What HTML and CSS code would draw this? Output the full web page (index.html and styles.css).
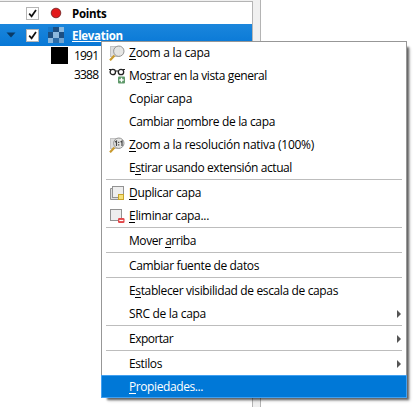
FILE: index.html
```html
<!DOCTYPE html>
<html lang="es">
<head>
<meta charset="utf-8">
<title>Capas</title>
<link rel="stylesheet" href="styles.css">
</head>
<body>
<div class="dock">
  <div class="tree">
    <div class="layer">
      <span class="twisty"></span>
      <svg class="check" viewBox="0 0 13 13"><rect x=".5" y=".5" width="12" height="12" fill="#fff" stroke="#b5b5b5"/><path d="M3.2 6.6 5.6 9.3 10 3" fill="none" stroke="#111" stroke-width="1.7"/></svg>
      <svg class="symbol" viewBox="0 0 16 16"><circle cx="8" cy="8" r="4.8" fill="#e31a1c" stroke="#6b2020" stroke-width=".8"/></svg>
      <span class="name points">Points</span>
    </div>
    <div class="layer selected">
      <svg class="twisty" viewBox="0 0 10 6"><path d="M.5 .5h9L5 5.5z" fill="#0a3a66"/></svg>
      <svg class="check" viewBox="0 0 13 13"><rect x=".5" y=".5" width="12" height="12" fill="#fff" stroke="#b5b5b5"/><path d="M3.2 6.6 5.6 9.3 10 3" fill="none" stroke="#111" stroke-width="1.7"/></svg>
      <svg class="symbol" viewBox="0 0 16 16" shape-rendering="crispEdges"><path fill="#2b6ca8" d="M0 0h16v16H0z"/><path fill="#1c4f82" d="M5 0h6v5H5zM0 5h5v6H0zM11 5h5v6h-5z"/><path fill="#8bb8dd" d="M11 0h5v5h-5zM5 5h6v6H5zM0 11h5v5H0z"/><path fill="#6fa3d0" d="M11 11h5v5h-5z"/><path fill="#1677c9" d="M0 0h5v5H0z"/></svg>
      <span class="name elevation">Elevation</span>
    </div>
    <div class="legend"><span class="swatch"></span><span class="value">1991</span></div>
    <div class="legend"><span class="swatch white"></span><span class="value">3388</span></div>
  </div>
</div>
<div class="menu">
  <div class="item"><svg class="icon" viewBox="0 0 16 16"><rect x="1.5" y="1.5" width="9" height="10" fill="#ddd" stroke="#c4c4c4"/><path d="M1 15.3 5.5 10.6" stroke="#c99a2e" stroke-width="2.2"/><circle cx="9.8" cy="6.2" r="5.2" fill="#e4e4e2" fill-opacity=".9" stroke="#969696"/></svg><span class="label" data-w="81"><u>Z</u>oom a la capa</span></div>
  <div class="item"><svg class="icon" viewBox="0 0 16 16"><path d="M0 1.5h2M14 1.5h2M6.5 3.5q1.5-1.5 3 0" stroke="#222" fill="none"/><circle cx="3.8" cy="4" r="2.7" fill="none" stroke="#222" stroke-width="1.3"/><circle cx="12" cy="4" r="2.7" fill="none" stroke="#222" stroke-width="1.3"/><rect x="9" y="8.5" width="7" height="7" rx="1" fill="#5d9869"/><path d="M12.5 9.8v4.4M10.3 12h4.4" stroke="#fff" stroke-width="1.3"/></svg><span class="label" data-w="138">Mo<u>s</u>trar en la vista general</span></div>
  <div class="item"><span class="icon"></span><span class="label" data-w="63">Copiar capa</span></div>
  <div class="item"><span class="icon"></span><span class="label" data-w="146">Cambiar <u>n</u>ombre de la capa</span></div>
  <div class="item"><svg class="icon" viewBox="0 0 16 16"><rect x="1.5" y="1.5" width="9" height="10" fill="#ddd" stroke="#c4c4c4"/><path d="M1 15.3 5.5 10.6" stroke="#c99a2e" stroke-width="2.2"/><circle cx="9.8" cy="6.2" r="5.2" fill="#e4e4e2" fill-opacity=".9" stroke="#969696"/><path d="M6 5 7.5 4v5M11.5 5 13 4v5M9.7 4.8v1.2M9.7 7.3v1.2" stroke="#444" stroke-width="1.2" fill="none"/></svg><span class="label" data-w="185"><u>Z</u>oom a la resolución nativa (100%)</span></div>
  <div class="item"><span class="icon"></span><span class="label" data-w="163">E<u>s</u>tirar usando extensión actual</span></div>
  <div class="separator"></div>
  <div class="item"><svg class="icon" viewBox="0 0 16 16"><path d="M3 3.5H1.5v11H10" fill="#ddd" stroke="#929292"/><rect x="3.5" y="1.5" width="11" height="11" fill="#eee" stroke="#929292"/><rect x="9.5" y="9.5" width="5" height="5" fill="#f6e27a" stroke="#c8a42c"/></svg><span class="label" data-w="72"><u>D</u>uplicar capa</span></div>
  <div class="item"><svg class="icon" viewBox="0 0 16 16"><rect x="1.5" y="1.5" width="11" height="11" fill="#eee" stroke="#929292"/><rect x="9" y="10" width="6.5" height="5" rx="1.3" fill="#e2474a"/><path d="M10.3 12.5h4" stroke="#fff" stroke-width="1.2"/></svg><span class="label" data-w="80"><u>E</u>liminar capa...</span></div>
  <div class="separator"></div>
  <div class="item"><span class="icon"></span><span class="label" data-w="67">Mover <u>a</u>rriba</span></div>
  <div class="separator"></div>
  <div class="item"><span class="icon"></span><span class="label" data-w="130">Cambiar fuente de datos</span></div>
  <div class="separator"></div>
  <div class="item"><span class="icon"></span><span class="label" data-w="209">E<u>s</u>tablecer visibilidad de escala de capas</span></div>
  <div class="item"><span class="icon"></span><span class="label" data-w="77">SRC de la capa</span><span class="arrow"></span></div>
  <div class="separator"></div>
  <div class="item"><span class="icon"></span><span class="label" data-w="44">Exportar</span><span class="arrow"></span></div>
  <div class="separator"></div>
  <div class="item"><span class="icon"></span><span class="label" data-w="33">Estilos</span><span class="arrow"></span></div>
  <div class="item active"><span class="icon"></span><span class="label" data-w="74"><u>P</u>ropiedades...</span></div>
</div>
<script src="menu.js"></script>
</body>
</html>
```
FILE: styles.css
```css
* { box-sizing: border-box; }
body {
  margin: 0;
  width: 416px;
  height: 407px;
  overflow: hidden;
  background: #fff;
  color: #000;
  font: 12px/15px "Open Sans", "Noto Sans", sans-serif;
}
u { text-decoration: none; box-shadow: 0 1px 0 currentColor; display: inline-block; line-height: 12px; }
.dock {
  width: 261px;
  height: 407px;
  padding: 1px 7px 0 0;
  background: #f0f0f0;
  border-right: 1px solid #b4b4b4;
}
.tree {
  height: 100%;
  background: #fff;
  border-top: 1px solid #b4b4b4;
  border-right: 1px solid #b4b4b4;
}
.layer {
  display: flex;
  align-items: center;
  height: 22px;
  padding-left: 6px;
}
.selected { background: linear-gradient(#1b86dc, #0878d6); color: #fff; }
.twisty { width: 10px; height: 6px; margin-right: 10px; }
.check { width: 13px; height: 13px; margin-right: 9px; }
.symbol { width: 16px; height: 16px; margin-right: 8px; }
.name { font-weight: 700; white-space: nowrap; font-size: 11.5px; }
.points { letter-spacing: -0.3px; }
.elevation { letter-spacing: -0.3px; text-decoration: underline; }
.legend { display: flex; align-items: center; height: 19px; padding-left: 51px; }
.swatch { width: 17px; height: 17px; margin-right: 6px; background: #000; }
.white { background: #fff; }
.value { letter-spacing: -0.8px; }
.menu {
  position: absolute;
  left: 101px;
  top: 41px;
  width: 306px;
  height: 357px;
  background: #fff;
  box-shadow: inset 0 0 0 1px #979797, 4px 4px 2px -2px rgba(0, 0, 0, .55), 5px 5px 3px -2px rgba(0, 0, 0, .15);
}
.item {
  display: flex;
  align-items: center;
  height: 23px;
  padding: 0 6px 0 8px;
}
.icon { width: 16px; height: 16px; margin-right: 4px; flex: none; }
.label { white-space: nowrap; }
.arrow {
  margin-left: auto;
  border: 4px solid transparent;
  border-left-color: #555;
  border-right-width: 0;
}
.separator { height: 2px; margin: 0 5px; border-top: 1px solid #bdbdbd; }
.active { background: #0078d7; color: #fff; border: 1px solid #42a0f0; padding-left: 7px; }
```
FILE: menu.js
```js
document.querySelectorAll('.label').forEach(function (el) {
  var diff = Number(el.dataset.w) - el.getBoundingClientRect().width;
  el.style.letterSpacing = diff / el.textContent.length + 'px';
});
```
